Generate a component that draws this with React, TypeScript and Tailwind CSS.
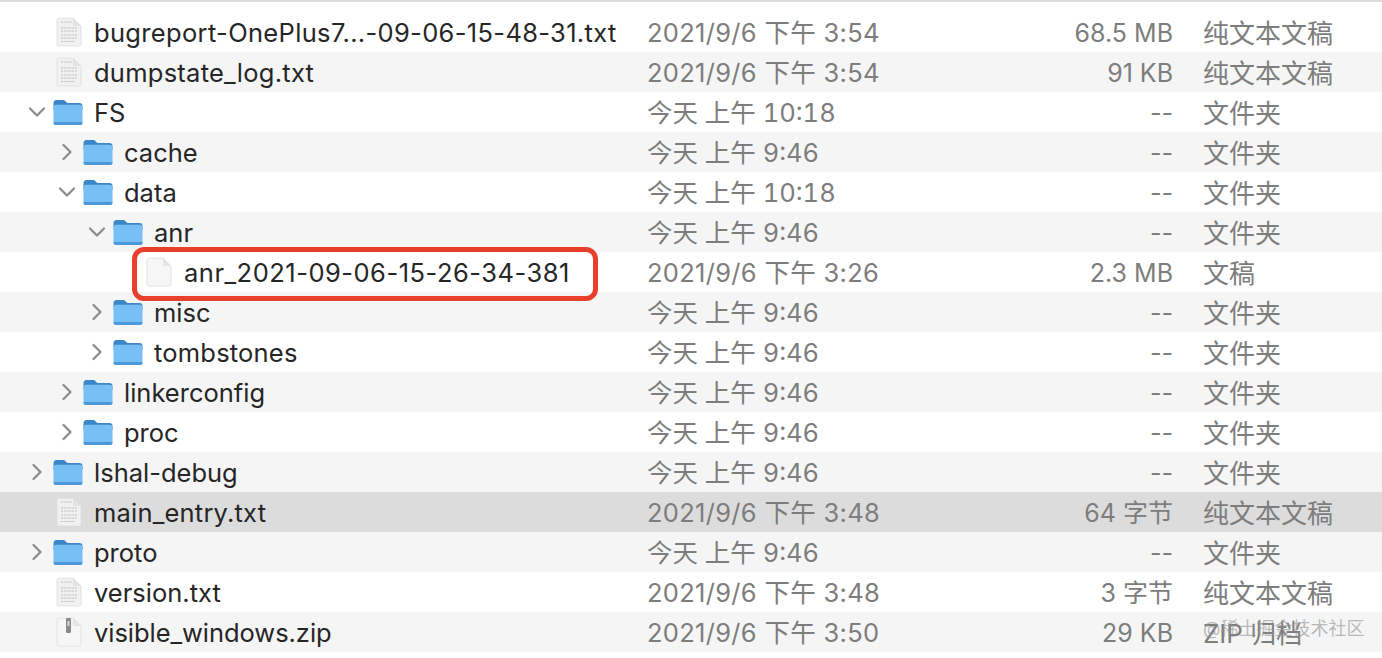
const Folder = () => (
  <svg width="30" height="28" viewBox="0 0 30 28" className="shrink-0">
    <path d="M0.500 5.500C0.500 3.500 1.500 2 3.500 2H10C11.500 2 12 2.500 13 3.800C13.700 4.700 14.300 5 15.500 5H26.500C28.500 5 29.500 6.300 29.500 8V12H0.500Z" fill="#3b86c8" />
    <path d="M0.500 9.200C0.500 7.800 1.500 6.800 3 6.800H27C28.500 6.800 29.500 7.800 29.500 9.200V24.500C29.500 26.200 28.500 27 27 27H3C1.500 27 0.500 26.200 0.500 24.500Z" fill="#78bff5" />
    <path d="M0.500 24H29.500V24.500C29.500 26.200 28.500 27 27 27H3C1.500 27 0.500 26.200 0.500 24.500Z" fill="#4f98d6" />
  </svg>
);

const TextFile = () => (
  <svg width="26" height="30" viewBox="0 0 26 30" className="shrink-0">
    <path d="M1 3C1 2 1.600 1.200 2.600 1.200H17L25 9V27.500C25 28.500 24.400 29 23.500 29H2.600C1.600 29 1 28.500 1 27.500Z" fill="#f1f1f1" stroke="#dddddd" strokeWidth="0.8" />
    <path d="M17 1.200V9H25Z" fill="#e2e2e2" />
    <g stroke="#bdbdbd" strokeWidth="1.200" strokeDasharray="2 0.800">
      <path d="M5 5H16" />
      <path d="M5 11H21" />
      <path d="M5 14H21" />
      <path d="M5 18H21" />
      <path d="M5 21H21" />
      <path d="M5 24.500H18" />
    </g>
  </svg>
);

const BlankFile = () => (
  <svg width="26" height="30" viewBox="0 0 26 30" className="shrink-0">
    <path d="M1 3C1 2 1.600 1.200 2.600 1.200H17L25 9V27.500C25 28.500 24.400 29 23.500 29H2.600C1.600 29 1 28.500 1 27.500Z" fill="#f6f6f6" stroke="#dddddd" strokeWidth="0.8" />
    <path d="M17 1.200V9H25Z" fill="#e4e4e4" />
  </svg>
);

const ZipFile = () => (
  <svg width="26" height="30" viewBox="0 0 26 30" className="shrink-0">
    <path d="M1 3C1 2 1.600 1.200 2.600 1.200H17L25 9V27.500C25 28.500 24.400 29 23.500 29H2.600C1.600 29 1 28.500 1 27.500Z" fill="#f6f6f6" stroke="#dddddd" strokeWidth="0.8" />
    <path d="M17 1.200V9H25Z" fill="#e4e4e4" />
    <rect x="10" y="1" width="5" height="15" rx="1" fill="#8a8a8a" />
    <rect x="11.500" y="4" width="2" height="5" fill="#d8d8d8" />
  </svg>
);

const Chevron = ({ open }: { open: boolean }) => (
  <svg width="18" height="18" viewBox="0 0 18 18" className="shrink-0" fill="none" stroke="#8a8a8a" strokeWidth="2.200" strokeLinecap="round" strokeLinejoin="round">
    {open ? <path d="M2 5.500L9 12.500L16 5.500" /> : <path d="M5.500 2L12.500 9L5.500 16" />}
  </svg>
);

type Kind = "text" | "blank" | "zip" | "open" | "closed";
type Row = { name: string; depth: number; kind: Kind; date: string; size: string; type: string; bg: string; track?: string };

const W = "bg-white";
const G = "bg-[#f5f5f5]";
const S = "bg-[#dcdcdc]";

const rows: Row[] = [
  { name: "bugreport-OnePlus7...-09-06-15-48-31.txt", depth: 0, kind: "text", date: "2021/9/6 下午 3:54", size: "68.5 MB", type: "纯文本文稿", bg: W, track: "tracking-[0.33px]" },
  { name: "dumpstate_log.txt", depth: 0, kind: "text", date: "2021/9/6 下午 3:54", size: "91 KB", type: "纯文本文稿", bg: G, track: "tracking-[0.25px]" },
  { name: "FS", depth: 0, kind: "open", date: "今天 上午 10:18", size: "--", type: "文件夹", bg: W },
  { name: "cache", depth: 1, kind: "closed", date: "今天 上午 9:46", size: "--", type: "文件夹", bg: G },
  { name: "data", depth: 1, kind: "open", date: "今天 上午 10:18", size: "--", type: "文件夹", bg: W },
  { name: "anr", depth: 2, kind: "open", date: "今天 上午 9:46", size: "--", type: "文件夹", bg: G },
  { name: "anr_2021-09-06-15-26-34-381", depth: 3, kind: "blank", date: "2021/9/6 下午 3:26", size: "2.3 MB", type: "文稿", bg: W, track: "tracking-[0.5px]" },
  { name: "misc", depth: 2, kind: "closed", date: "今天 上午 9:46", size: "--", type: "文件夹", bg: G },
  { name: "tombstones", depth: 2, kind: "closed", date: "今天 上午 9:46", size: "--", type: "文件夹", bg: W, track: "tracking-[0.2px]" },
  { name: "linkerconfig", depth: 1, kind: "closed", date: "今天 上午 9:46", size: "--", type: "文件夹", bg: G },
  { name: "proc", depth: 1, kind: "closed", date: "今天 上午 9:46", size: "--", type: "文件夹", bg: W },
  { name: "lshal-debug", depth: 0, kind: "closed", date: "今天 上午 9:46", size: "--", type: "文件夹", bg: G },
  { name: "main_entry.txt", depth: 0, kind: "text", date: "2021/9/6 下午 3:48", size: "64 字节", type: "纯文本文稿", bg: S, track: "tracking-[0.2px]" },
  { name: "proto", depth: 0, kind: "closed", date: "今天 上午 9:46", size: "--", type: "文件夹", bg: G },
  { name: "version.txt", depth: 0, kind: "text", date: "2021/9/6 下午 3:48", size: "3 字节", type: "纯文本文稿", bg: W },
  { name: "visible_windows.zip", depth: 0, kind: "zip", date: "2021/9/6 下午 3:50", size: "29 KB", type: "ZIP 归档", bg: G, track: "tracking-[-0.05px]" },
];

const indent = ["pl-0", "pl-[30px]", "pl-[60px]", "pl-[90px]"];

function NameCell({ row }: { row: Row }) {
  const isFolder = row.kind === "open" || row.kind === "closed";
  return (
    <div className={`flex items-center w-[647px] shrink-0 ${indent[row.depth]}`}>
      <div className="w-[53px] shrink-0 flex items-center justify-end pr-[7px]">
        {isFolder && <Chevron open={row.kind === "open"} />}
      </div>
      <div className="w-[41px] shrink-0 flex items-center">
        {isFolder ? <Folder /> : (
          <div className="pl-[3px]">
            {row.kind === "text" ? <TextFile /> : row.kind === "zip" ? <ZipFile /> : <BlankFile />}
          </div>
        )}
      </div>
      <span className={`text-[#262626] whitespace-nowrap pt-[3px] ${row.track ?? ""}`}>{row.name}</span>
    </div>
  );
}

export default function App() {
  return (
    <div className="relative w-[1382px] h-[658px] overflow-hidden bg-white text-[25.500px] font-['Inter','Noto_Sans_CJK_SC',sans-serif]">
      <div className="h-[2px] bg-[#dddddd]" />
      <div className="h-[10px]" />
      {rows.map((row) => (
        <div key={row.name} className={`flex items-center h-10 ${row.bg}`}>
          <NameCell row={row} />
          <span className={`w-[356px] shrink-0 text-[#7d7d7d] whitespace-nowrap pt-[3px] ${row.date.startsWith("今天") ? "tabular-nums" : "tracking-[0.3px]"}`}>{row.date}</span>
          <span className="w-[170px] shrink-0 text-right text-[25px] text-[#7d7d7d] whitespace-nowrap pt-[3px]">{row.size}</span>
          <span className="pl-[30px] text-[26px] text-[#7d7d7d] whitespace-nowrap pt-[3px]">{row.type}</span>
        </div>
      ))}
      <div className="absolute left-[132px] top-[247px] w-[466px] h-[54px] border-[5px] border-[#e8402c] rounded-[12px]" />
      <div className="absolute left-[1203px] top-[615px] text-[18px] text-[#8f8f8f]/60 whitespace-nowrap">@稀土掘金技术社区</div>
    </div>
  );
}
